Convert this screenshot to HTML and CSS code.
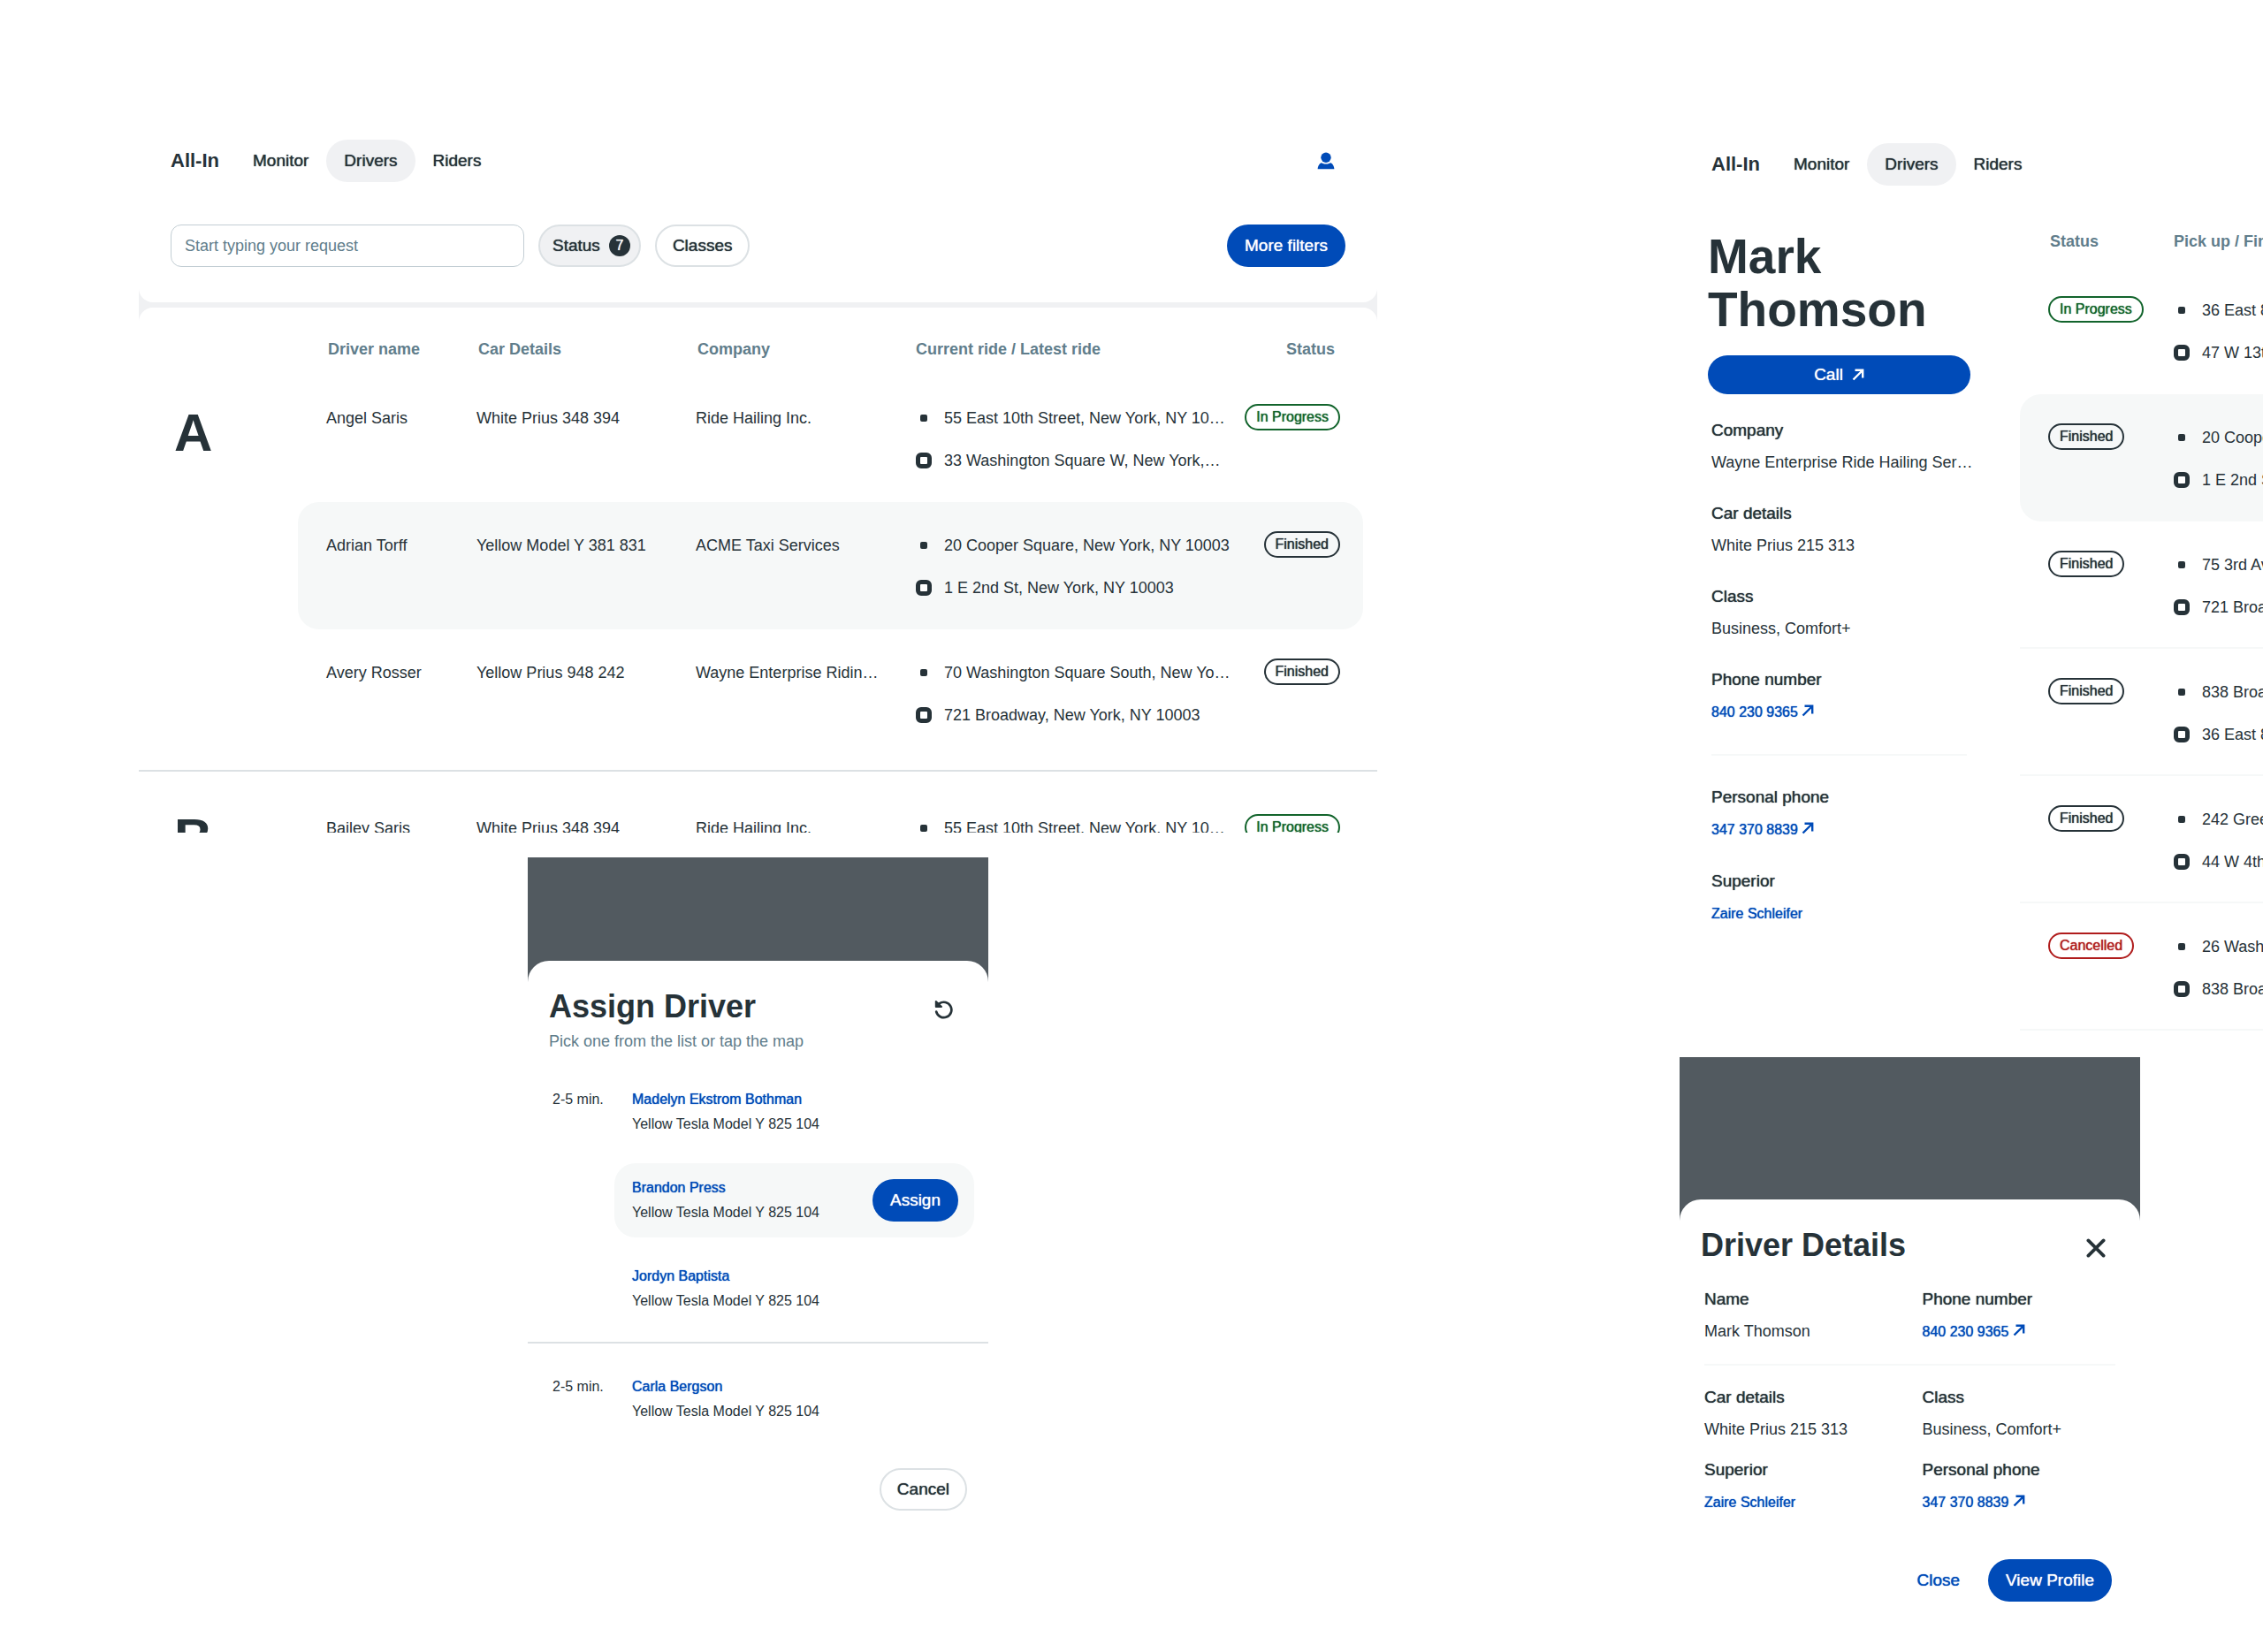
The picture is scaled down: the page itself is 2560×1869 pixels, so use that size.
FILE: index.html
```html
<!DOCTYPE html>
<html lang="en">

<head>
  <title>All-In Drivers</title>

  <meta charset="UTF-8">
  <meta name="viewport" content="width=device-width, initial-scale=1">

  <link rel="stylesheet" href="styles.css">
</head>
<body>

  <!-- shared icons -->
  <svg class="sprite" aria-hidden="true">
    <symbol id="arrow" viewBox="0 0 14 14">
      <path d="M1.5 12.5 11.5 2.5M3.5 1.8H12.2V10.5" fill="none" stroke="currentColor" stroke-width="2.4"/>
    </symbol>
    <symbol id="user" viewBox="0 0 20 20">
      <circle cx="10" cy="6.2" r="5.7" fill="currentColor"/>
      <path d="M4.4 12.2C6 12.2 7 13.6 10 13.6S14 12.2 15.6 12.2C18 13.6 19.3 16.4 19.4 19.3H.6C.7 16.4 2 13.6 4.4 12.2Z" fill="currentColor"/>
    </symbol>
    <symbol id="undo" viewBox="0 0 22 22">
      <path d="M2.2 13.6A8.7 8.7 0 1 0 5.6 4.4L3.4 6.6" fill="none" stroke="currentColor" stroke-width="2.7" stroke-linecap="round"/>
      <path d="M1.8 2V8H8Z" fill="currentColor" stroke="currentColor" stroke-width="2" stroke-linejoin="round"/>
    </symbol>
    <symbol id="cross" viewBox="0 0 22 22">
      <path d="M2.4 2.4 19.6 19.6M19.6 2.4 2.4 19.6" fill="none" stroke="currentColor" stroke-width="3.8" stroke-linecap="round"/>
    </symbol>
  </svg>

  <div class="board">

    <div class="column">

      <!-- drivers list -->
      <section class="screen list-screen">
        <header class="top">
          <nav class="nav">
            <a class="logo" href="#">All-In</a>
            <a class="nav-link" href="#">Monitor</a>
            <a class="nav-link active" href="#">Drivers</a>
            <a class="nav-link" href="#">Riders</a>
            <button class="icon-btn account" aria-label="Account"><svg width="20" height="20"><use href="#user"/></svg></button>
          </nav>
          <div class="toolbar">
            <input class="search" type="text" placeholder="Start typing your request" aria-label="Search drivers">
            <button class="btn outline selected">Status <span class="count">7</span></button>
            <button class="btn outline">Classes</button>
            <button class="btn primary more">More filters</button>
          </div>
        </header>

        <div class="card">
          <table class="drivers">
            <colgroup>
              <col class="col-letter">
              <col class="col-driver">
              <col class="col-car">
              <col class="col-company">
              <col>
              <col class="col-status">
            </colgroup>
            <thead>
              <tr>
                <td></td>
                <th>Driver name</th>
                <th>Car Details</th>
                <th>Company</th>
                <th class="ride">Current ride / Latest ride</th>
                <th class="state">Status</th>
              </tr>
            </thead>
            <tbody>
              <tr>
                <th class="letter" rowspan="3">A</th>
                <td>Angel Saris</td>
                <td>White Prius 348 394</td>
                <td>Ride Hailing Inc.</td>
                <td class="ride">
                  <div class="stop from">55 East 10th Street, New York, NY 10…</div>
                  <div class="stop to">33 Washington Square W, New York,…</div>
                </td>
                <td class="state"><span class="tag progress">In Progress</span></td>
              </tr>
              <tr class="highlight">
                <td>Adrian Torff</td>
                <td>Yellow Model Y 381 831</td>
                <td>ACME Taxi Services</td>
                <td class="ride">
                  <div class="stop from">20 Cooper Square, New York, NY 10003</div>
                  <div class="stop to">1 E 2nd St, New York, NY 10003</div>
                </td>
                <td class="state"><span class="tag">Finished</span></td>
              </tr>
              <tr>
                <td>Avery Rosser</td>
                <td>Yellow Prius 948 242</td>
                <td>Wayne Enterprise Ridin…</td>
                <td class="ride">
                  <div class="stop from">70 Washington Square South, New Yo…</div>
                  <div class="stop to">721 Broadway, New York, NY 10003</div>
                </td>
                <td class="state"><span class="tag">Finished</span></td>
              </tr>
            </tbody>
            <tbody>
              <tr class="divider">
                <td colspan="6"><hr></td>
              </tr>
              <tr>
                <th class="letter">B</th>
                <td>Bailey Saris</td>
                <td>White Prius 348 394</td>
                <td>Ride Hailing Inc.</td>
                <td class="ride">
                  <div class="stop from">55 East 10th Street, New York, NY 10…</div>
                  <div class="stop to">33 Washington Square W, New York,…</div>
                </td>
                <td class="state"><span class="tag progress">In Progress</span></td>
              </tr>
            </tbody>
          </table>
        </div>
      </section>

      <!-- assign driver -->
      <section class="phone assign">
        <div class="sheet">
          <div class="sheet-head">
            <h2>Assign Driver</h2>
            <button class="icon-btn" aria-label="Reload"><svg width="22" height="22"><use href="#undo"/></svg></button>
          </div>
          <p class="hint">Pick one from the list or tap the map</p>

          <div class="wait-group">
            <span class="wait">2-5 min.</span>
            <ul class="picks">
              <li class="pick">
                <div>
                  <a class="link" href="#">Madelyn Ekstrom Bothman</a>
                  <p>Yellow Tesla Model Y 825 104</p>
                </div>
              </li>
              <li class="pick highlight">
                <div>
                  <a class="link" href="#">Brandon Press</a>
                  <p>Yellow Tesla Model Y 825 104</p>
                </div>
                <button class="btn primary">Assign</button>
              </li>
              <li class="pick">
                <div>
                  <a class="link" href="#">Jordyn Baptista</a>
                  <p>Yellow Tesla Model Y 825 104</p>
                </div>
              </li>
            </ul>
          </div>
          <div class="wait-group">
            <span class="wait">2-5 min.</span>
            <ul class="picks">
              <li class="pick">
                <div>
                  <a class="link" href="#">Carla Bergson</a>
                  <p>Yellow Tesla Model Y 825 104</p>
                </div>
              </li>
            </ul>
          </div>

          <div class="actions">
            <button class="btn outline">Cancel</button>
          </div>
        </div>
      </section>

    </div>

    <div class="column profile-column">

      <!-- driver profile -->
      <section class="screen profile-screen">
        <nav class="nav">
          <a class="logo" href="#">All-In</a>
          <a class="nav-link" href="#">Monitor</a>
          <a class="nav-link active" href="#">Drivers</a>
          <a class="nav-link" href="#">Riders</a>
        </nav>

        <div class="profile">
          <aside class="person">
            <h1>Mark Thomson</h1>
            <a class="btn primary call" href="#">Call <svg width="14" height="14"><use href="#arrow"/></svg></a>
            <div class="facts">
              <dl>
                <dt>Company</dt>
                <dd>Wayne Enterprise Ride Hailing Ser…</dd>
              </dl>
              <dl>
                <dt>Car details</dt>
                <dd>White Prius 215 313</dd>
              </dl>
              <dl>
                <dt>Class</dt>
                <dd>Business, Comfort+</dd>
              </dl>
              <dl>
                <dt>Phone number</dt>
                <dd><a class="link" href="#">840 230 9365 <svg width="14" height="14"><use href="#arrow"/></svg></a></dd>
              </dl>
              <hr>
              <dl>
                <dt>Personal phone</dt>
                <dd><a class="link" href="#">347 370 8839 <svg width="14" height="14"><use href="#arrow"/></svg></a></dd>
              </dl>
              <dl>
                <dt>Superior</dt>
                <dd><a class="link" href="#">Zaire Schleifer</a></dd>
              </dl>
            </div>
          </aside>

          <table class="rides">
            <thead>
              <tr>
                <th class="col-state">Status</th>
                <th>Pick up / Finish</th>
              </tr>
            </thead>
            <tbody>
              <tr>
                <td class="state"><span class="tag progress">In Progress</span></td>
                <td>
                  <div class="stop from">36 East 8th Street, New York, NY 10003</div>
                  <div class="stop to">47 W 13th Street, New York, NY 10011</div>
                </td>
              </tr>
              <tr class="highlight">
                <td class="state"><span class="tag">Finished</span></td>
                <td>
                  <div class="stop from">20 Cooper Square, New York, NY 10003</div>
                  <div class="stop to">1 E 2nd St, New York, NY 10003</div>
                </td>
              </tr>
              <tr>
                <td class="state"><span class="tag">Finished</span></td>
                <td>
                  <div class="stop from">75 3rd Avenue, New York, NY 10003</div>
                  <div class="stop to">721 Broadway, New York, NY 10003</div>
                </td>
              </tr>
              <tr>
                <td class="state"><span class="tag">Finished</span></td>
                <td>
                  <div class="stop from">838 Broadway, New York, NY 10003</div>
                  <div class="stop to">36 East 8th Street, New York, NY 10003</div>
                </td>
              </tr>
              <tr>
                <td class="state"><span class="tag">Finished</span></td>
                <td>
                  <div class="stop from">242 Greene Street, New York, NY 10003</div>
                  <div class="stop to">44 W 4th Street, New York, NY 10012</div>
                </td>
              </tr>
              <tr>
                <td class="state"><span class="tag cancelled">Cancelled</span></td>
                <td>
                  <div class="stop from">26 Washington Place, New York, NY 10003</div>
                  <div class="stop to">838 Broadway, New York, NY 10003</div>
                </td>
              </tr>
            </tbody>
          </table>
        </div>
      </section>

      <!-- driver details -->
      <section class="phone details">
        <div class="sheet">
          <div class="sheet-head">
            <h2>Driver Details</h2>
            <button class="icon-btn" aria-label="Close"><svg width="22" height="22"><use href="#cross"/></svg></button>
          </div>

          <div class="details-grid">
            <dl>
              <dt>Name</dt>
              <dd>Mark Thomson</dd>
            </dl>
            <dl>
              <dt>Phone number</dt>
              <dd><a class="link" href="#">840 230 9365 <svg width="14" height="14"><use href="#arrow"/></svg></a></dd>
            </dl>
            <hr>
            <dl>
              <dt>Car details</dt>
              <dd>White Prius 215 313</dd>
            </dl>
            <dl>
              <dt>Class</dt>
              <dd>Business, Comfort+</dd>
            </dl>
            <dl>
              <dt>Superior</dt>
              <dd><a class="link" href="#">Zaire Schleifer</a></dd>
            </dl>
            <dl>
              <dt>Personal phone</dt>
              <dd><a class="link" href="#">347 370 8839 <svg width="14" height="14"><use href="#arrow"/></svg></a></dd>
            </dl>
          </div>

          <div class="actions">
            <button class="btn text">Close</button>
            <button class="btn primary">View Profile</button>
          </div>
        </div>
      </section>

    </div>

  </div>

</body>
</html>
```

FILE: styles.css
```css
:root {
  --ink: #263238;
  --muted: #607d8b;
  --blue: #004bb8;
  --green: #12642c;
  --red: #b01c1c;
  --soft: #f0f1f3;
  --highlight: #f6f8f8;
  --line: #dce1e4;
  --overlay: #525a60;
}

*, *::before {
  box-sizing: border-box;
}

body {
  margin: 0;
  background: #fff;
  color: var(--ink);
  font-family: "Liberation Sans", Arial, sans-serif;
  font-size: 18px;
}

h1, h2, p, ul, dl, dd {
  margin: 0;
  padding: 0;
}

a {
  color: inherit;
  text-decoration: none;
}

button, input {
  font: inherit;
}

hr {
  margin: 0;
  border: 0;
  height: 2px;
  background: var(--highlight);
}

.sprite {
  display: block;
  width: 0;
  height: 0;
}

.board {
  display: grid;
  grid-template-columns: minmax(0, 1401fr) minmax(0, 660fr);
  gap: 342px;
  padding: 142px 0 40px 157px;
}

.column {
  display: flex;
  flex-direction: column;
  gap: 28px;
  overflow: hidden;
}

.profile-column {
  gap: 30px;
  padding-top: 4px;
}

/* medium weight */
.nav-link, .btn, .tag, .link, dt {
  text-shadow: 0 0 1px currentColor;
}

/* navigation */
.nav {
  display: flex;
  align-items: center;
  padding: 0 36px;
}

.logo {
  margin-right: 18px;
  font-size: 22px;
  font-weight: bold;
}

.nav-link {
  padding: 0 20px;
  font-size: 19px;
  line-height: 48px;
  border-radius: 24px;
}

.nav-link.active {
  background: var(--soft);
}

.icon-btn {
  display: flex;
  padding: 12px 9px 6px;
  border: 0;
  background: none;
  color: var(--ink);
  cursor: pointer;
}

.account {
  margin-left: auto;
  padding: 12px;
  color: var(--blue);
}

/* buttons */
.btn {
  display: inline-flex;
  align-items: center;
  justify-content: center;
  gap: 10px;
  height: 48px;
  padding: 0 20px;
  border: 0;
  border-radius: 24px;
  background: none;
  font-size: 19px;
  cursor: pointer;
}

.btn.primary {
  background: var(--blue);
  color: #fff;
}

.btn.outline {
  padding: 0 18px;
  border: 2px solid var(--line);
  color: var(--ink);
}

.btn.outline.selected {
  padding: 0 10px 0 14px;
  background: var(--soft);
}

.btn.text {
  color: var(--blue);
}

.count {
  width: 24px;
  border-radius: 50%;
  background: var(--ink);
  color: #fff;
  font-size: 16px;
  line-height: 24px;
}

/* drivers list */
.list-screen {
  height: 800px;
  overflow: hidden;
  background: var(--soft);
}

.top {
  padding: 16px 0 40px;
  background: #fff;
  border-radius: 0 0 16px 16px;
}

.toolbar {
  display: flex;
  gap: 16px;
  margin-top: 48px;
  padding: 0 36px;
}

.search {
  width: 400px;
  height: 48px;
  padding: 0 15px;
  border: 1px solid #c3ced4;
  border-radius: 12px;
  color: var(--ink);
}

.search::placeholder {
  color: var(--muted);
  opacity: 1;
}

.more {
  margin-left: auto;
}

.card {
  margin-top: 6px;
  padding-right: 16px;
  background: #fff;
  border-radius: 16px 16px 0 0;
}

table {
  border-spacing: 0;
  text-align: left;
}

th, td {
  padding: 0;
  vertical-align: top;
}

thead th {
  color: var(--muted);
  line-height: 20px;
}

tbody td {
  height: 144px;
  padding: 25px 0 23px;
  line-height: 48px;
  white-space: nowrap;
}

td.state {
  padding-top: 33px;
}

.drivers {
  width: 100%;
  table-layout: fixed;
}

.col-letter { width: 180px; }
.col-driver { width: 170px; }
.col-car { width: 248px; }
.col-company { width: 281px; }
.col-status { width: 134px; }

.drivers th, .drivers td {
  padding-left: 32px;
}

.drivers thead th {
  padding-top: 37px;
  padding-bottom: 19px;
  padding-left: 34px;
}

.drivers .ride {
  padding-left: 0;
}

.drivers .state {
  padding-right: 26px;
  padding-left: 0;
  text-align: right;
}

.drivers thead .state {
  padding-right: 32px;
}

.drivers .letter {
  padding: 36px 0 0 40px;
  font-size: 60px;
  line-height: 60px;
}

.drivers .divider + tr .letter {
  padding-top: 30px;
}

.drivers .divider td {
  height: 32px;
  padding: 15px 0;
  line-height: 2px;
}

.divider hr {
  margin-right: -16px;
  background: var(--line);
}

.highlight td {
  background: var(--highlight);
}

.highlight td:first-child {
  border-radius: 24px 0 0 24px;
}

.highlight td:last-child {
  border-radius: 0 24px 24px 0;
}

/* ride stops */
.stop {
  display: flex;
  align-items: center;
  gap: 14px;
}

.stop::before {
  content: "";
  flex: none;
  width: 18px;
  height: 18px;
  border: 5px solid var(--ink);
  border-radius: 6px;
  background: #fff;
}

.stop.from::before {
  width: 8px;
  height: 8px;
  margin: 0 5px;
  border-width: 4px;
  border-radius: 2px;
}

.tag {
  display: inline-block;
  height: 30px;
  padding: 0 11px;
  border: 2px solid currentColor;
  border-radius: 15px;
  font-size: 16px;
  line-height: 26px;
  vertical-align: top;
}

.tag.progress {
  color: var(--green);
}

.tag.cancelled {
  color: var(--red);
}

/* bottom sheets */
.phone {
  width: 521px;
  background: linear-gradient(var(--overlay) 200px, #fff 200px);
}

.sheet {
  background: #fff;
  border-radius: 24px 24px 0 0;
}

.sheet-head {
  display: flex;
  justify-content: space-between;
  padding: 32px 30px 0 24px;
}

.sheet h2 {
  font-size: 36px;
  line-height: 40px;
}

.assign {
  align-self: center;
  padding-top: 117px;
}

.hint {
  padding: 7px 24px 26px;
  color: var(--muted);
  line-height: 24px;
}

.wait-group {
  display: flex;
  padding: 0 16px 18px 28px;
  font-size: 16px;
  line-height: 28px;
}

.wait-group + .wait-group {
  padding-top: 21px;
  border-top: 2px solid var(--line);
}

.wait {
  width: 70px;
  padding-top: 14px;
}

.picks {
  display: flex;
  flex: 1;
  flex-direction: column;
  gap: 16px;
  list-style: none;
}

.pick {
  display: flex;
  align-items: center;
  justify-content: space-between;
  padding: 14px 18px 14px 20px;
  border-radius: 24px;
}

.pick.highlight {
  background: var(--highlight);
}

.link {
  color: var(--blue);
  font-size: 16px;
}

.actions {
  display: flex;
  justify-content: flex-end;
  gap: 12px;
  padding: 18px 24px 24px;
}

/* driver profile */
.profile {
  display: flex;
  gap: 56px;
  margin-top: 50px;
  padding-left: 32px;
}

.profile-screen {
  padding-top: 16px;
}

.person {
  flex: none;
  width: 297px;
}

h1 {
  font-size: 55px;
  line-height: 60px;
}

.call {
  display: flex;
  height: 44px;
  margin: 22px 0 23px;
}

.facts {
  display: flex;
  flex-direction: column;
  gap: 22px;
  padding: 0 4px;
}

.facts hr {
  margin: 7px 0;
}

dl {
  line-height: 36px;
  white-space: nowrap;
}

dt {
  font-size: 19px;
}

.rides {
  flex: none;
  width: 1000px;
}

.rides .col-state {
  width: 174px;
}

.rides thead th {
  padding: 3px 0 19px;
}

.rides thead .col-state {
  padding-left: 34px;
}

.rides td.state {
  padding-left: 32px;
}

.rides tbody td {
  padding-bottom: 21px;
  border-bottom: 2px solid var(--highlight);
}

.rides tbody tr:first-child td {
  border-bottom-color: transparent;
}

/* driver details */
.details {
  padding-top: 161px;
}

.details-grid {
  display: grid;
  grid-template-columns: 1fr 1fr;
  gap: 10px 28px;
  padding: 23px 28px 28px;
}

.details-grid hr {
  grid-column: 1 / -1;
  margin: 8px 0;
}

.details .actions {
  padding-right: 32px;
}
```
